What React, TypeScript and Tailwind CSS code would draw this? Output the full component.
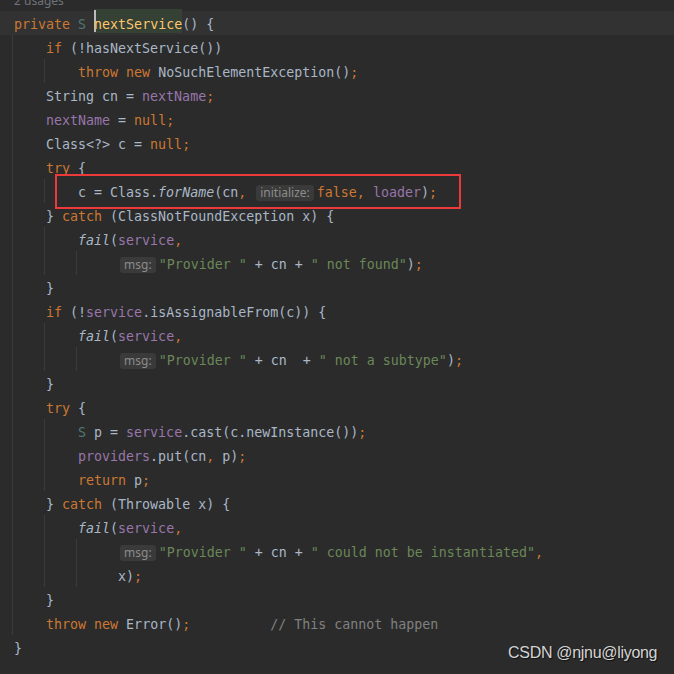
type Seg = [string, string] | { hint: string }

const K = 'text-[#cc7832]'
const P = 'text-[#a9b7c6]'
const F = 'text-[#9876aa]'
const S = 'text-[#6a8759]'
const C = 'text-[#808080]'
const T = 'text-[#507874]'
const I = 'text-[#a9b7c6] italic'

const IND1 = '    '
const IND2 = '        '
const CONT = '             '

type Line = { segs: Seg[]; guides: number[] }

const failLine: Seg[] = [[IND2, P], ['fail', I], ['(', P], ['service', F], [',', K]]

const lines: Line[] = [
  { segs: [[IND1, P], ['if', K], [' (!hasNextService())', P]], guides: [12] },
  { segs: [[IND2, P], ['throw', K], [' ', P], ['new', K], [' NoSuchElementException()', P], [';', K]], guides: [12, 44] },
  { segs: [[IND1 + 'String cn = ', P], ['nextName', F], [';', K]], guides: [12] },
  { segs: [[IND1, P], ['nextName', F], [' = ', P], ['null', K], [';', K]], guides: [12] },
  { segs: [[IND1 + 'Class<?> c = ', P], ['null', K], [';', K]], guides: [12] },
  { segs: [[IND1, P], ['try', K], [' {', P]], guides: [12] },
  {
    segs: [[IND2 + 'c = Class.', P], ['forName', I], ['(cn', P], [',', K], [' ', P], { hint: 'initialize:' }, ['false', K], [',', K], [' ', P], ['loader', F], [')', P], [';', K]],
    guides: [12, 44],
  },
  { segs: [[IND1 + '} ', P], ['catch', K], [' (ClassNotFoundException x) {', P]], guides: [12] },
  { segs: failLine, guides: [12, 44] },
  { segs: [[CONT, P], { hint: 'msg:' }, ['"Provider "', S], [' + cn + ', P], ['" not found"', S], [')', P], [';', K]], guides: [12, 44, 76] },
  { segs: [[IND1 + '}', P]], guides: [12] },
  { segs: [[IND1, P], ['if', K], [' (!', P], ['service', F], ['.isAssignableFrom(c)) {', P]], guides: [12] },
  { segs: failLine, guides: [12, 44] },
  { segs: [[CONT, P], { hint: 'msg:' }, ['"Provider "', S], [' + cn  + ', P], ['" not a subtype"', S], [')', P], [';', K]], guides: [12, 44, 76] },
  { segs: [[IND1 + '}', P]], guides: [12] },
  { segs: [[IND1, P], ['try', K], [' {', P]], guides: [12] },
  { segs: [[IND2, P], ['S', T], [' p = ', P], ['service', F], ['.cast(c.newInstance())', P], [';', K]], guides: [12, 44] },
  { segs: [[IND2, P], ['providers', F], ['.put(cn', P], [',', K], [' p)', P], [';', K]], guides: [12, 44] },
  { segs: [[IND2, P], ['return', K], [' p', P], [';', K]], guides: [12, 44] },
  { segs: [[IND1 + '} ', P], ['catch', K], [' (Throwable x) {', P]], guides: [12] },
  { segs: failLine, guides: [12, 44] },
  { segs: [[CONT, P], { hint: 'msg:' }, ['"Provider "', S], [' + cn + ', P], ['" could not be instantiated"', S], [',', K]], guides: [12, 44, 76] },
  { segs: [[CONT + 'x)', P], [';', K]], guides: [12, 44, 76] },
  { segs: [[IND1 + '}', P]], guides: [12] },
  { segs: [[IND1, P], ['throw', K], [' ', P], ['new', K], [' Error()', P], [';', K], ['          ', P], ['// This cannot happen', C]], guides: [12] },
  { segs: [['}', P]], guides: [] },
]

function Hint({ text }: { text: string }) {
  return (
    <span className="inline-flex items-center h-[16px] ml-[2px] mr-[3px] px-[4px] rounded-[3px] bg-[#3a3a3a] text-[#8c8c8c] font-['Noto_Sans',sans-serif] text-[12px] leading-none align-middle">
      {text}
    </span>
  )
}

function CodeLine({ line }: { line: Line }) {
  return (
    <div className="relative h-[24px] flex items-center pt-[4px] pl-[14px] whitespace-pre">
      {line.guides.map((g) => (
        <span key={g} className="absolute top-0 bottom-0 w-px bg-[#3a3a3a]" style={{ left: g }} />
      ))}
      {line.segs.map((s, i) =>
        Array.isArray(s) ? (
          <span key={i} className={s[1]}>
            {s[0]}
          </span>
        ) : (
          <Hint key={i} text={s.hint} />
        )
      )}
    </div>
  )
}

export default function App() {
  return (
    <div className="relative w-[674px] h-[674px] overflow-hidden bg-[#2b2b2b] font-['DejaVu_Sans_Mono',monospace] text-[13.3px]">
      <div className="h-[11px] overflow-hidden pl-[14px]">
        <div className="-mt-[5px] text-[12px] leading-none text-[#6f737a] font-['Noto_Sans',sans-serif]">2 usages</div>
      </div>
      <div className="relative h-[24px] flex items-center pt-[4px] pl-[14px] whitespace-pre bg-[#323232]">
        <span className={K}>private</span>
        <span className={P}> </span>
        <span className={T}>S</span>
        <span className={P}> </span>
        <span className="relative flex items-center text-[#ffc66d]">
          <span className="absolute left-0 right-0 -top-[6px] h-[24px] bg-[#344134]" />
          <span className="absolute left-0 -top-[5px] h-[22px] w-[2px] bg-[#bbbbbb]" />
          <span className="relative">nextService</span>
        </span>
        <span className={P}>() {'{'}</span>
      </div>
      {lines.map((l, i) => (
        <CodeLine key={i} line={l} />
      ))}
      <div className="absolute left-[55px] top-[174px] w-[406px] h-[35px] border-2 border-[#ec3a3a]" />
      <div className="absolute left-[508px] top-[643px] text-[16px] leading-[20px] tracking-[-0.3px] text-[#d4d4d4] font-['Liberation_Sans',sans-serif] [text-shadow:1px_1px_1px_#111]">
        CSDN @njnu@liyong
      </div>
    </div>
  )
}
